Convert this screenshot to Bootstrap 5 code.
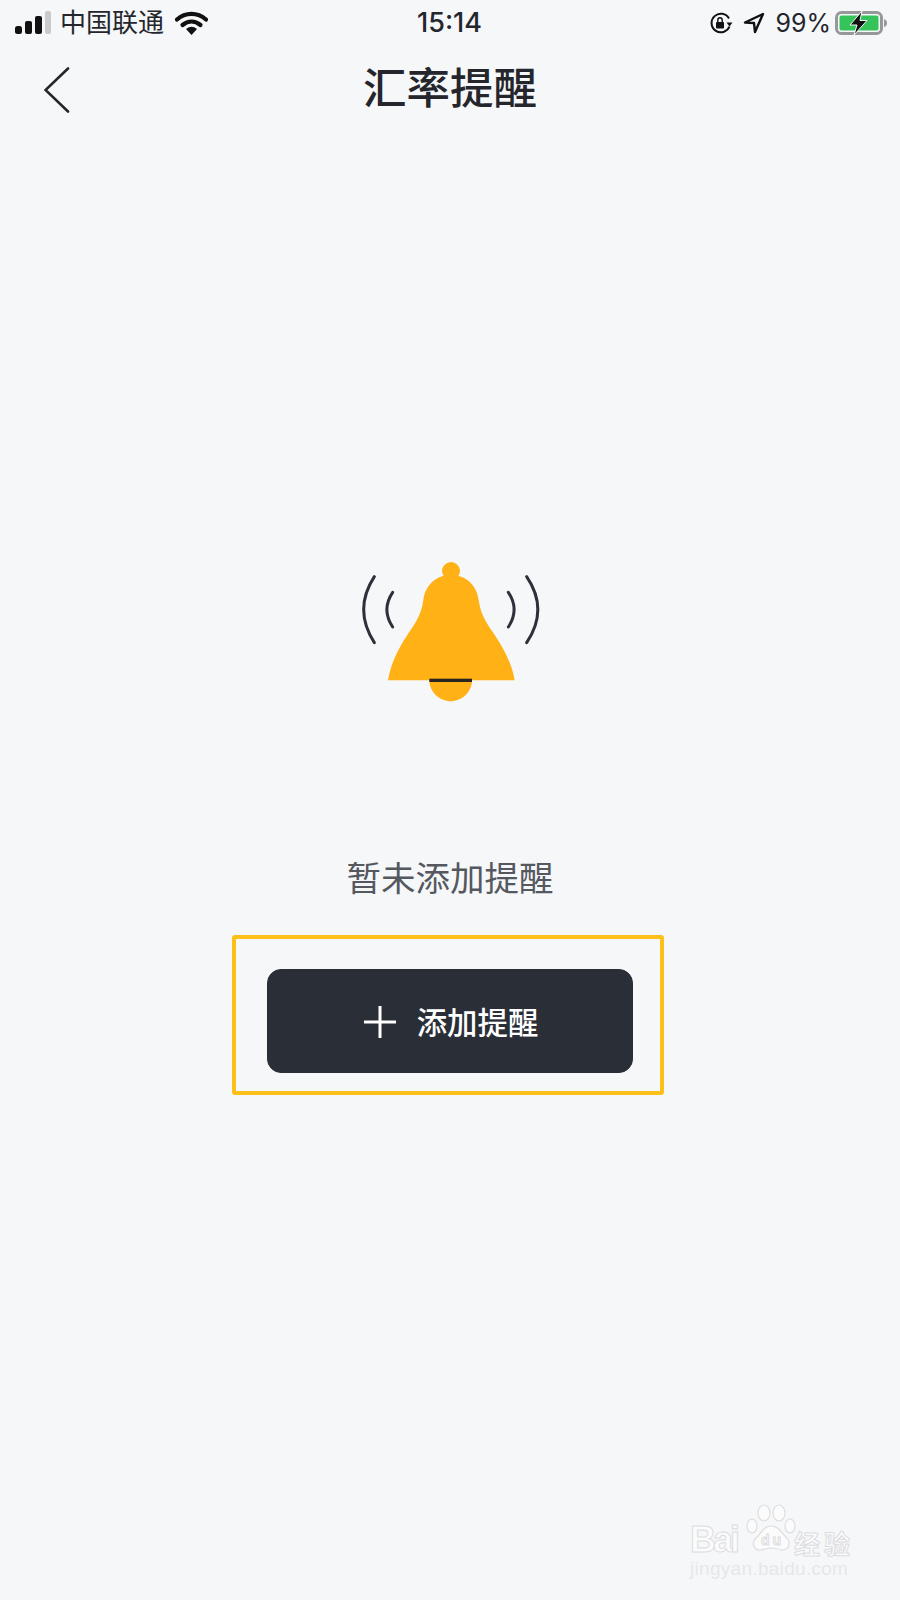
<!DOCTYPE html>
<html lang="zh-CN">

<head>
    <meta charset="UTF-8">
    <meta name="viewport" content="width=device-width, initial-scale=1.0">
    <title>汇率提醒</title>
    <link href="https://cdn.jsdelivr.net/npm/bootstrap@5.3.3/dist/css/bootstrap.min.css" rel="stylesheet">
    <style>
        body {
            background-color: #f6f7f9;
            color: #24262c;
            font-family: Inter, "Noto Sans CJK SC", sans-serif;
        }

        .phone-page {
            position: relative;
            width: 900px;
            height: 1600px;
            overflow: hidden;
        }

        .status-row {
            height: 46px;
            padding: 0 12px 0 15px;
            font-size: 25px;
            line-height: 46px;
        }

        .status-side {
            flex: 1 1 0;
        }

        .carrier {
            font-family: "Noto Sans CJK SC", sans-serif;
            font-size: 26px;
            line-height: 40px;
            padding-bottom: 5px;
            margin-left: 9px;
            margin-right: 11px;
        }

        .clock {
            font-weight: 500;
            font-size: 27px;
            margin-left: -4px;
        }

        .arrow-icon {
            margin-left: 10px;
        }

        .percent {
            margin: 0 4px 0 10px;
        }

        .title-row {
            height: 88px;
            padding: 0 44px;
        }

        .page-title {
            font-family: "Noto Sans CJK SC", sans-serif;
            font-size: 43.500px;
            font-weight: 500;
            line-height: 80px;
            padding-bottom: 8px;
            margin: 0;
            color: #24262c;
        }

        .empty-box {
            padding-top: 428px;
        }

        .bell-icon {
            display: block;
            margin-left: 2px;
        }

        .empty-text {
            font-family: "Noto Sans CJK SC", sans-serif;
            font-size: 34.500px;
            line-height: 50px;
            color: #55585f;
            margin: 149px 0 0;
        }

        .mark-frame {
            width: 432px;
            height: 160px;
            margin-top: 34px;
            margin-right: 5px;
            border: 4px solid #fdc01a;
            border-radius: 3px;
            padding: 30px 0 0 31px;
        }

        .add-btn {
            width: 366px;
            height: 104px;
            border-radius: 14px;
            background-color: #2a2e37;
            border-color: #2a2e37;
            color: #fff;
            font-family: "Noto Sans CJK SC", sans-serif;
            font-size: 30.400px;
            font-weight: 500;
            gap: 21px;
            padding: 2px 0 0 3px;
        }

        .add-btn:hover {
            background-color: #2a2e37;
            color: #fff;
        }

        .watermark {
            position: absolute;
            left: 690px;
            top: 1500px;
            width: 175px;
            height: 78px;
        }

        .wm-logo {
            display: block;
        }

        .wm-logo text {
            fill: #fbfbfc;
            stroke: #dcdddf;
            stroke-width: 1;
            font-family: "Liberation Sans", sans-serif;
            font-weight: 700;
        }

        .wm-logo .wm-cn {
            font-family: "Noto Sans CJK SC", sans-serif;
        }

        .wm-url {
            font-family: "Liberation Sans", sans-serif;
            font-size: 19px;
            line-height: 20px;
            color: #e6e7e9;
            letter-spacing: .3px;
            margin-top: -1px;
        }
    </style>
</head>

<body>
    <div class="phone-page d-flex flex-column">
        <!-- status bar -->
        <div class="status-row d-flex align-items-center">
            <div class="status-side d-flex align-items-center">
                <svg width="36" height="24" viewBox="0 0 36 24">
                    <rect x="0" y="15" width="7" height="8" rx="2.500" fill="#111"/>
                    <rect x="10" y="10" width="7" height="13" rx="2" fill="#111"/>
                    <rect x="20" y="5" width="7" height="18" rx="2" fill="#111"/>
                    <rect x="30" y="0" width="6" height="23" rx="2" fill="#c9cacc"/>
                </svg>
                <span class="carrier">中国联通</span>
                <svg width="33" height="24" viewBox="0 0 33 24">
                    <path d="M2 8.500C10.500 1 22.500 1 31 8.500" fill="none" stroke="#111" stroke-width="4.200" stroke-linecap="round"/>
                    <path d="M7.500 14C13 9.500 20 9.500 25.500 14" fill="none" stroke="#111" stroke-width="4.200" stroke-linecap="round"/>
                    <path d="M11 18Q16.500 13.500 22 18L16.500 24Z" fill="#111"/>
                </svg>
            </div>
            <span class="clock">15:14</span>
            <div class="status-side d-flex align-items-center justify-content-end">
                <svg width="24" height="22" viewBox="0 0 24 22">
                    <path d="M20.500 14.500A9.300 9.300 0 1 1 20 6.500" fill="none" stroke="#111" stroke-width="2"/>
                    <path d="M17.500 10.500h6l-3 4z" fill="#111"/>
                    <rect x="7" y="10" width="8" height="6.500" rx="1" fill="#111"/>
                    <path d="M8.800 10.500V8a2.200 2.200 0 0 1 4.400 0v2.500" fill="none" stroke="#111" stroke-width="1.400"/>
                </svg>
                <svg class="arrow-icon" width="22" height="22" viewBox="0 0 22 22">
                    <path d="M20 2L2 10.500l9 .5 1 9z" fill="none" stroke="#111" stroke-width="2.400" stroke-linejoin="round"/>
                </svg>
                <span class="percent">99%</span>
                <svg width="53" height="24" viewBox="0 0 53 24">
                    <rect x="1.500" y="1.500" width="45" height="21" rx="5" fill="none" stroke="#97989a" stroke-width="3"/>
                    <rect x="4.500" y="4.500" width="39" height="15" rx="2" fill="#35c459"/>
                    <path d="M49 8q3 1 3 4t-3 4z" fill="#97989a"/>
                    <path d="M27 0L15 14h7L19 24 32 9.500h-7l2-9.500z" fill="#111" stroke="#f6f7f9" stroke-width="1"/>
                </svg>
            </div>
        </div>

        <!-- nav -->
        <div class="title-row d-flex align-items-center">
            <div class="status-side d-flex">
                <svg width="26" height="46" viewBox="0 0 26 46">
                    <path d="M24 1.500L1.500 23 24 44.500" fill="none" stroke="#24262c" stroke-width="2.600" stroke-linecap="round"/>
                </svg>
            </div>
            <h1 class="page-title">汇率提醒</h1>
            <div class="status-side"></div>
        </div>

        <!-- empty state -->
        <div class="empty-box d-flex flex-column align-items-center">
            <svg class="bell-icon" width="182" height="140" viewBox="60 50 546 420">
                <circle cx="333" cy="77" r="27" fill="#ffb116"/>
                <path d="M144 405C152 355 175 310 200 272C222 238 243 215 250 165C255 115 295 88 333 88C371 88 411 115 416 165C423 215 444 238 466 272C491 310 516 355 524 405Z" fill="#ffb116"/>
                <path d="M268 405h128C396 440 365 468 332 468C299 468 268 440 268 405Z" fill="#ffb116"/>
                <rect x="268" y="400" width="128" height="10" fill="#2a2420"/>
                <g fill="none" stroke="#2d303a" stroke-width="9" stroke-linecap="round">
                    <path d="M103 94C60 160 60 225 103 292"/>
                    <path d="M158 141C135 175 135 210 158 245"/>
                    <path d="M560 94C605 160 605 225 560 292"/>
                    <path d="M505 141C528 175 528 210 505 245"/>
                </g>
            </svg>
            <p class="empty-text">暂未添加提醒</p>
            <div class="mark-frame">
                <button type="button" class="btn add-btn d-flex align-items-center justify-content-center">
                    <svg width="32" height="32" viewBox="0 0 32 32">
                        <path d="M0 16h32M16 0v32" stroke="#fff" stroke-width="3"/>
                    </svg>
                    <span>添加提醒</span>
                </button>
            </div>
        </div>

        <!-- watermark -->
        <div class="watermark">
            <svg class="wm-logo" width="175" height="60" viewBox="0 0 175 60">
                <text x="0" y="52" font-size="36" textLength="50">Bai</text>
                <g fill="#fbfbfc" stroke="#dcdddf" stroke-width="1.200">
                    <ellipse cx="62" cy="26" rx="5" ry="7"/>
                    <ellipse cx="74" cy="13" rx="6" ry="8"/>
                    <ellipse cx="89" cy="13" rx="6" ry="8"/>
                    <ellipse cx="100" cy="26" rx="5" ry="7"/>
                    <path d="M81 26c-8 0-10 8-15 12-5 5-2 13 5 12 4-1 7-2 10-2s7 1 11 2c7 0 9-7 5-12-5-4-8-12-16-12z"/>
                </g>
                <text x="71" y="45" font-size="14" textLength="20">du</text>
                <text class="wm-cn" x="104" y="54" font-size="26" textLength="56">经验</text>
            </svg>
            <div class="wm-url">jingyan.baidu.com</div>
        </div>
    </div>
    <script src="https://cdn.jsdelivr.net/npm/bootstrap@5.3.3/dist/js/bootstrap.bundle.min.js"></script>
</body>

</html>
